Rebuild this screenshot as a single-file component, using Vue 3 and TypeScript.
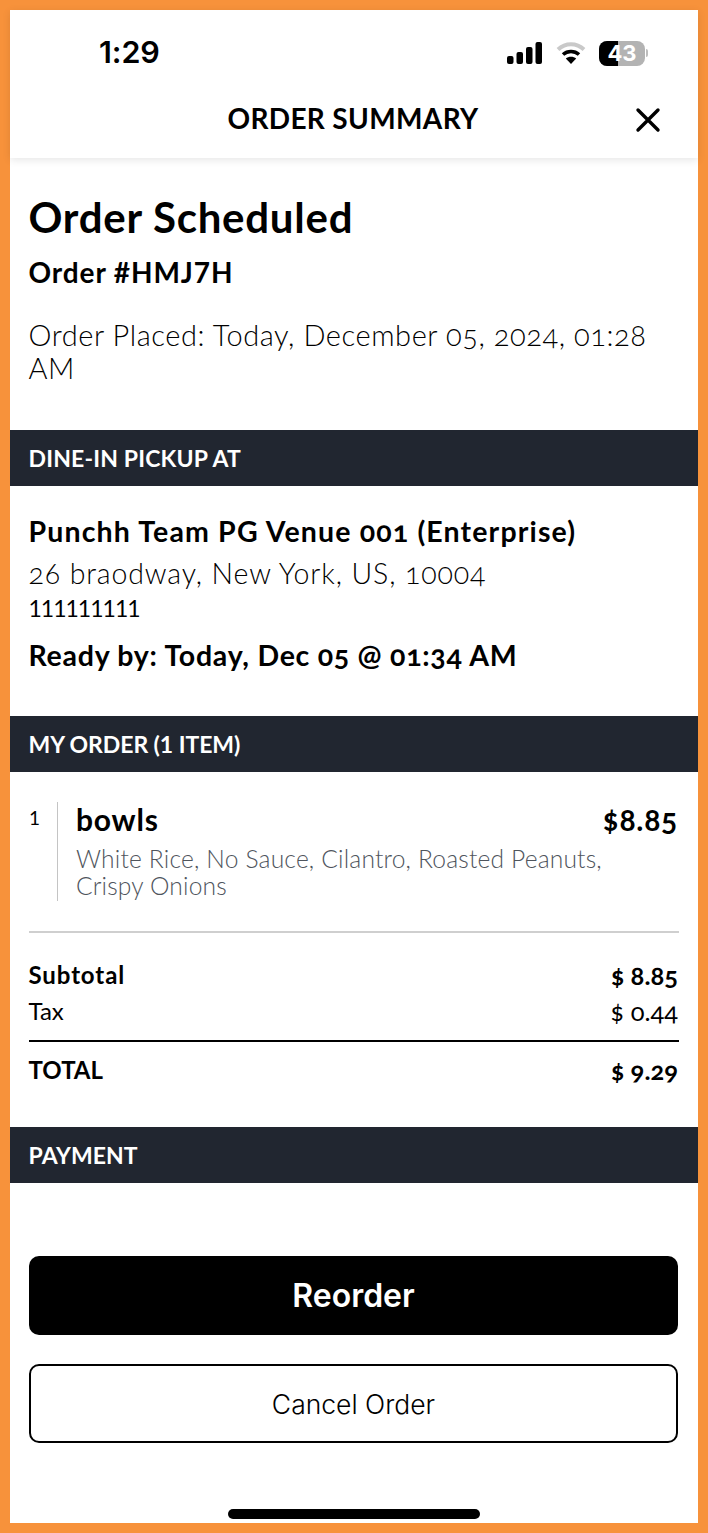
<script setup lang="ts">
interface Line { label: string; amount: string; kind: string }
const lines: Line[] = [
  { label: 'Subtotal', amount: '$ 8.85', kind: 'strong' },
  { label: 'Tax', amount: '$ 0.44', kind: 'plain' },
]
</script>

<template>
  <div class="frame">
    <div class="screen">
      <header class="top">
        <div class="status">
          <span class="clock">1:29</span>
          <div class="status-icons">
            <svg width="36" height="24" viewBox="0 0 36 24">
              <rect x="0" y="15" width="6.5" height="8" rx="2" />
              <rect x="9.5" y="11" width="6.5" height="12" rx="2" />
              <rect x="19" y="6" width="6.5" height="17" rx="2" />
              <rect x="28.5" y="1" width="6.5" height="22" rx="2" />
            </svg>
            <svg class="wifi" width="30" height="24" viewBox="0 0 30 24">
              <path d="M2 8.5C9.5 1.5 20.5 1.5 28 8.5" stroke="#c9c9c9" stroke-width="4" fill="none" />
              <path d="M7 13.5C11.5 9.5 18.5 9.5 23 13.5" stroke="#000" stroke-width="3.6" fill="none" />
              <path d="M15 23L9.8 17.6C12.6 15 17.4 15 20.2 17.6Z" fill="#000" />
            </svg>
            <div class="battery">
              <div class="charge"></div>
              <span>43</span>
            </div>
            <i class="cap"></i>
          </div>
        </div>
        <div class="title-row">
          <h1>ORDER SUMMARY</h1>
          <svg class="close" width="26" height="26" viewBox="0 0 26 26">
            <path d="M3 3L23 23M23 3L3 23" stroke="#000" stroke-width="3.4" stroke-linecap="round" />
          </svg>
        </div>
      </header>

      <section class="intro">
        <h2>Order Scheduled</h2>
        <p class="order-no">Order #HMJ7H</p>
        <p class="placed">Order Placed: Today, December 05, 2024, 01:28 AM</p>
      </section>

      <div class="band wide">DINE-IN PICKUP AT</div>
      <section class="venue">
        <p class="venue-name">Punchh Team PG Venue 001 (Enterprise)</p>
        <p class="address">26 braodway, New York, US, 10004</p>
        <p class="phone">111111111</p>
        <p class="ready">Ready by: Today, Dec 05 @ 01:34 AM</p>
      </section>

      <div class="band tight">MY ORDER (1 ITEM)</div>
      <section class="order">
        <div class="item">
          <span class="qty">1</span>
          <div class="item-body">
            <div class="item-head">
              <span class="item-name">bowls</span>
              <span class="item-price">$8.85</span>
            </div>
            <p class="mods">White Rice, No Sauce, Cilantro, Roasted Peanuts, Crispy Onions</p>
          </div>
        </div>
        <div class="totals">
          <div v-for="line in lines" :key="line.label" class="row" :class="line.kind">
            <span>{{ line.label }}</span>
            <span class="amount">{{ line.amount }}</span>
          </div>
        </div>
        <div class="row grand">
          <span>TOTAL</span>
          <span class="amount">$ 9.29</span>
        </div>
      </section>

      <div class="band">PAYMENT</div>

      <div class="actions">
        <button class="reorder">Reorder</button>
        <button class="cancel">Cancel Order</button>
      </div>
      <div class="home"></div>
    </div>
  </div>
</template>

<style>
html, body { margin: 0; background: #f7923b; }
</style>

<style scoped>
* { box-sizing: border-box; }
p, h1, h2 { margin: 0; }
.frame {
  width: 708px;
  height: 1533px;
  padding: 10px;
  background: #f7923b;
  font-family: "Lato", "Open Sans", sans-serif;
  color: #000;
}
.screen {
  position: relative;
  height: 1513px;
  background: #fff;
  display: flex;
  flex-direction: column;
}
.top {
  height: 148px;
  box-shadow: 0 2px 8px rgba(0, 0, 0, 0.1);
  flex: none;
}
.status {
  height: 84px;
  padding: 24px 50px 0 89px;
  display: flex;
  justify-content: space-between;
}
.clock {
  font: 600 30.5px/36px "Inter", sans-serif;
  letter-spacing: -0.1px;
}
.status-icons {
  display: flex;
  align-items: flex-start;
  padding-top: 7px;
}
.wifi { margin-left: 13px; }
.battery {
  position: relative;
  width: 46px;
  height: 25px;
  margin-left: 13px;
  border-radius: 8px;
  background: #b3b3b3;
  overflow: hidden;
  text-align: center;
  color: #fff;
  font: 700 22px/25px "Inter", sans-serif;
}
.battery span { position: relative; }
.charge {
  position: absolute;
  inset: 0 auto 0 0;
  width: 19px;
  background: #000;
}
.cap {
  width: 2px;
  height: 8px;
  margin: 8px 0 0 1px;
  background: #bdbdbd;
  border-radius: 0 2px 2px 0;
}
.title-row {
  position: relative;
  text-align: center;
  padding: 6px 2px 0 0;
}
h1 {
  font: 700 28px/36px "Lato", sans-serif;
  letter-spacing: 0.35px;
}
.close {
  position: absolute;
  right: 37px;
  top: 13px;
}
.intro {
  height: 272px;
  padding: 37px 18.5px 0;
  flex: none;
}
h2 {
  font: 700 42px/44px "Lato", sans-serif;
  letter-spacing: 0.75px;
}
.order-no {
  margin-top: 16px;
  font: 700 28px/34px "Lato", sans-serif;
  letter-spacing: 0.9px;
}
.placed {
  margin-top: 29px;
  font: 300 29px/33px "Lato", sans-serif;
  letter-spacing: 0.57px;
}
.band {
  height: 56px;
  padding: 0 18.5px;
  flex: none;
  background: #212630;
  color: #fff;
  font: 700 23px/56px "Lato", sans-serif;
  letter-spacing: 0.05px;
}
.band.wide { letter-spacing: 0.17px; }
.band.tight { letter-spacing: -0.07px; }
.venue {
  height: 230px;
  padding: 27px 18.5px 0;
  flex: none;
}
.venue-name {
  font: 700 28.5px/36px "Lato", sans-serif;
  letter-spacing: 1.15px;
}
.address {
  margin-top: 3px;
  font: 300 28.5px/42px "Lato", sans-serif;
  letter-spacing: 0.87px;
}
.phone {
  font: 400 23px/28px "Lato", sans-serif;
  letter-spacing: -1px;
}
.ready {
  margin-top: 15px;
  font: 700 28.5px/36px "Lato", sans-serif;
  letter-spacing: 0.73px;
}
.order {
  height: 355px;
  padding: 30px 19px 0;
  flex: none;
}
.item {
  display: flex;
  height: 99px;
}
.qty {
  width: 28px;
  font: 400 19px/32px "Lato", sans-serif;
}
.item-body {
  flex: 1;
  border-left: 1px solid #c4c4c4;
  padding-left: 18px;
}
.item-head {
  display: flex;
  justify-content: space-between;
  margin-right: 1px;
  margin-top: -1px;
}
.item-name {
  font: 700 30px/36px "Lato", sans-serif;
  letter-spacing: 0.8px;
}
.item-price {
  font: 700 30px/36px "Lato", sans-serif;
  letter-spacing: 0.7px;
}
.mods {
  max-width: 535px;
  margin-top: 8px;
  font: 300 24.6px/27px "Lato", sans-serif;
  letter-spacing: 0.17px;
  color: #4f555d;
}
.totals {
  margin-top: 30px;
  border-top: 2px solid #cfcfcf;
  border-bottom: 2px solid #000;
  padding: 24px 0 9px;
  height: 111px;
}
.row {
  display: flex;
  justify-content: space-between;
  margin: 0 1px 0 -0.5px;
  font-size: 24px;
  line-height: 36px;
}
.amount { font-size: 25.5px; }
.strong { font-weight: 700; }
.strong span:first-child { letter-spacing: 0.9px; }
.grand {
  font-weight: 700;
  line-height: 28px;
  margin-top: 14px;
}
.actions {
  position: absolute;
  left: 19px;
  right: 20px;
  top: 1246px;
  display: flex;
  flex-direction: column;
  gap: 29px;
}
button {
  height: 79px;
  width: 100%;
  border-radius: 10px;
  font-family: "Inter", sans-serif;
  color: #000;
}
.reorder {
  border: 0;
  background: #000;
  color: #fff;
  font-weight: 600;
  font-size: 32px;
  padding-bottom: 2px;
}
.cancel {
  background: #fff;
  border: 2px solid #000;
  font-size: 26.5px;
  font-weight: 300;
}
.home {
  position: absolute;
  left: 218px;
  top: 1499px;
  width: 252px;
  height: 10px;
  border-radius: 5px;
  background: #000;
}
/* Old-style figures; kept last so the font shorthands above don't reset them */
.placed, .venue-name, .address, .ready, .item-price, .amount {
  font-variant-numeric: oldstyle-nums;
}
</style>
